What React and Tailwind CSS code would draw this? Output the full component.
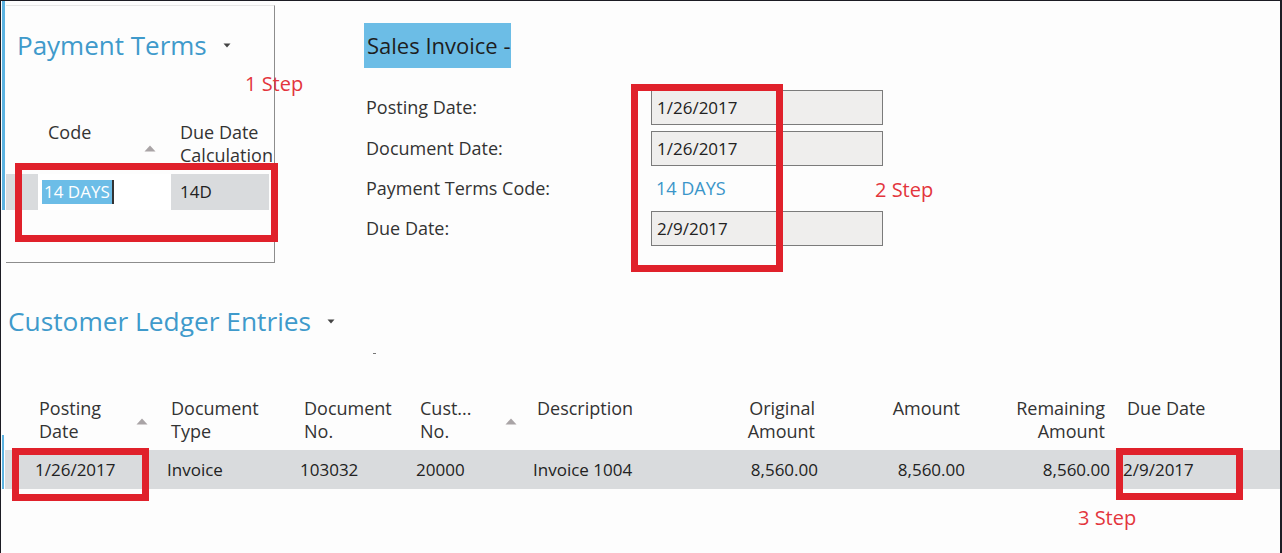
import React from 'react';

const RED = 'border-[#e0212b]';

function SortTri() {
  return (
    <svg width="12" height="7" viewBox="0 0 12 7" className="shrink-0">
      <path d="M6 0.5 L11.5 6.5 L0.5 6.5 Z" fill="#a9a4a6" />
    </svg>
  );
}

function Caret() {
  return (
    <svg width="8" height="5" viewBox="0 0 8 5">
      <path d="M0.5 0.5 L7.5 0.5 L4 4.5 Z" fill="#444" />
    </svg>
  );
}

function PaymentTerms() {
  return (
    <div className="flex items-start">
      <div className="ml-[1px] w-[3px] h-[209px] bg-[#5cb3e1]" />
      <div className="mt-[4px] ml-[1px] w-[269px] h-[258px] border-t border-[#e6e6e6] border-r border-r-[#8d8d8d] border-b border-b-[#8d8d8d] overflow-hidden">
        <div className="pt-[23px] pl-[11px] flex items-center gap-[16px]">
          <span className="text-[26px] leading-[32px] text-[#3f9acb]">Payment Terms</span>
          <Caret />
        </div>
        <div className="mt-[60px] flex h-[53px] text-[18px] leading-[23px] text-[#333]">
          <div className="w-[164px] pl-[42px] pr-[14px] flex items-center">
            <span className="self-start">Code</span>
            <span className="ml-auto mt-[1px]"><SortTri /></span>
          </div>
          <div className="pl-[10px] whitespace-nowrap">
            <div>Due Date</div>
            <div>Calculation</div>
          </div>
        </div>
        <div className="flex h-[36px] text-[17px] items-stretch">
          <div className="w-[32px] bg-[#d9dbdd]" />
          <div className="w-[133px] bg-white flex items-center pl-[4px]">
            <span className="bg-[#6cbde7] text-white px-[2px] leading-[24px] border-r-2 border-[#333]">14 DAYS</span>
          </div>
          <div className="w-[98px] bg-[#d9dbdd] flex items-center pl-[9px] text-[#222]">14D</div>
        </div>
      </div>
    </div>
  );
}

function Field({ label, value, input, h = 'h-[35px]' }) {
  return (
    <div className={`flex items-center ${h}`}>
      <div className="w-[285px] text-[18px] text-[#333]">{label}</div>
      {input ? (
        <div className="w-[232px] h-[35px] border border-[#7b7b7b] bg-[#efeeed] flex items-center pl-[5px] text-[17px] text-[#222]">{value}</div>
      ) : (
        <div className="pl-[5px] text-[18px] text-[#3a95c9]">{value}</div>
      )}
    </div>
  );
}

function SalesInvoice() {
  return (
    <div className="ml-[89px] pt-[22px]">
      <div className="w-[147px] h-[45px] bg-[#6cbde6] overflow-hidden flex items-center pl-[3px] whitespace-nowrap">
        <span className="text-[22px] text-[#1e1e1e]">Sales Invoice -</span>
      </div>
      <div className="ml-[2px] mt-[22px] flex flex-col">
        <Field label="Posting Date:" value="1/26/2017" input />
        <div className="h-[6px]" />
        <Field label="Document Date:" value="1/26/2017" input />
        <Field label="Payment Terms Code:" value="14 DAYS" h="h-[45px]" />
        <Field label="Due Date:" value="2/9/2017" input />
      </div>
    </div>
  );
}

const cols = [
  { w: 'w-[132px]', head: ['Posting', 'Date'], val: '1/26/2017', sort: true },
  { w: 'w-[133px]', head: ['Document', 'Type'], val: 'Invoice' },
  { w: 'w-[116px]', head: ['Document', 'No.'], val: '103032' },
  { w: 'w-[117px]', head: ['Cust...', 'No.'], val: '20000', sort: true, sp: 'pr-[11px]' },
  { w: 'w-[170px]', head: ['Description'], val: 'Invoice 1004' },
  { w: 'w-[125px]', head: ['Original', 'Amount'], val: '8,560.00', right: true, hp: 'pr-[8px]' },
  { w: 'w-[147px]', head: ['Amount'], val: '8,560.00', right: true, hp: 'pr-[10px]' },
  { w: 'w-[145px]', head: ['Remaining', 'Amount'], val: '8,560.00', right: true, hp: 'pr-[10px]' },
  { w: 'w-[150px]', head: ['Due Date'], val: '2/9/2017', last: true },
];

function LedgerEntries() {
  return (
    <div className="flex">
      <div className="flex flex-col w-[4px]">
        <div className="h-[132px]" />
        <div className="ml-[1px] w-[2px] flex-1 bg-[#5cb3e1]" />
      </div>
      <div className="flex-1">
        <div className="pl-[3px] flex items-center gap-[16px]">
          <span className="text-[26.3px] leading-[36px] text-[#3f9acb]">Customer Ledger Entries</span>
          <Caret />
        </div>
        <div className="ml-[368px] mt-[14px] w-[3px] h-[1px] bg-[#777]" />
        <div className="mt-[43px] pl-[25px] flex h-[53px] text-[18px] leading-[23px] text-[#333]">
          {cols.map((c, i) => (
            <div key={i} className={`${c.w} flex items-center ${c.right ? 'justify-end ' + c.hp : c.last ? 'pl-[12px]' : 'pl-[9px] ' + (c.sp || 'pr-[14px]')}`}>
              <div className={`self-start whitespace-nowrap ${c.right ? 'text-right' : ''}`}>
                {c.head.map((h) => <div key={h}>{h}</div>)}
              </div>
              {c.sort && <span className="ml-auto mt-[-4px]"><SortTri /></span>}
            </div>
          ))}
        </div>
        <div className="pl-[25px] flex h-[39px] bg-[#d9dbdd] text-[17px] text-[#222] items-center">
          {cols.map((c, i) => (
            <div key={i} className={`${c.w} whitespace-nowrap ${c.right ? 'text-right pr-[5px]' : c.last ? 'pl-[8px]' : 'pl-[5px]'}`}>{c.val}</div>
          ))}
        </div>
      </div>
    </div>
  );
}

export default function App() {
  return (
    <div
      className="relative w-[1282px] h-[553px] overflow-hidden bg-[#fdfdfd] border-t border-l border-r-2 border-[#1c1c24]"
      style={{ fontFamily: '"Open Sans", "Noto Sans", sans-serif' }}
    >
      <div className="flex h-[302px]">
        <PaymentTerms />
        <SalesInvoice />
      </div>
      <LedgerEntries />

      {/* annotations */}
      <div className={`absolute left-[14px] top-[162px] w-[263px] h-[79px] border-[7px] ${RED}`} />
      <div className={`absolute left-[630px] top-[83px] w-[152px] h-[188px] border-[7px] ${RED}`} />
      <div className={`absolute left-[11px] top-[447px] w-[137px] h-[53px] border-[7px] ${RED}`} />
      <div className={`absolute left-[1115px] top-[447px] w-[127px] h-[52px] border-[7px] ${RED}`} />
      <div className="absolute left-[244px] top-[68px] text-[20px] text-[#e3353c]">1 Step</div>
      <div className="absolute left-[874px] top-[174px] text-[20px] text-[#e3353c]">2 Step</div>
      <div className="absolute left-[1077px] top-[502px] text-[20px] text-[#e3353c]">3 Step</div>
    </div>
  );
}
